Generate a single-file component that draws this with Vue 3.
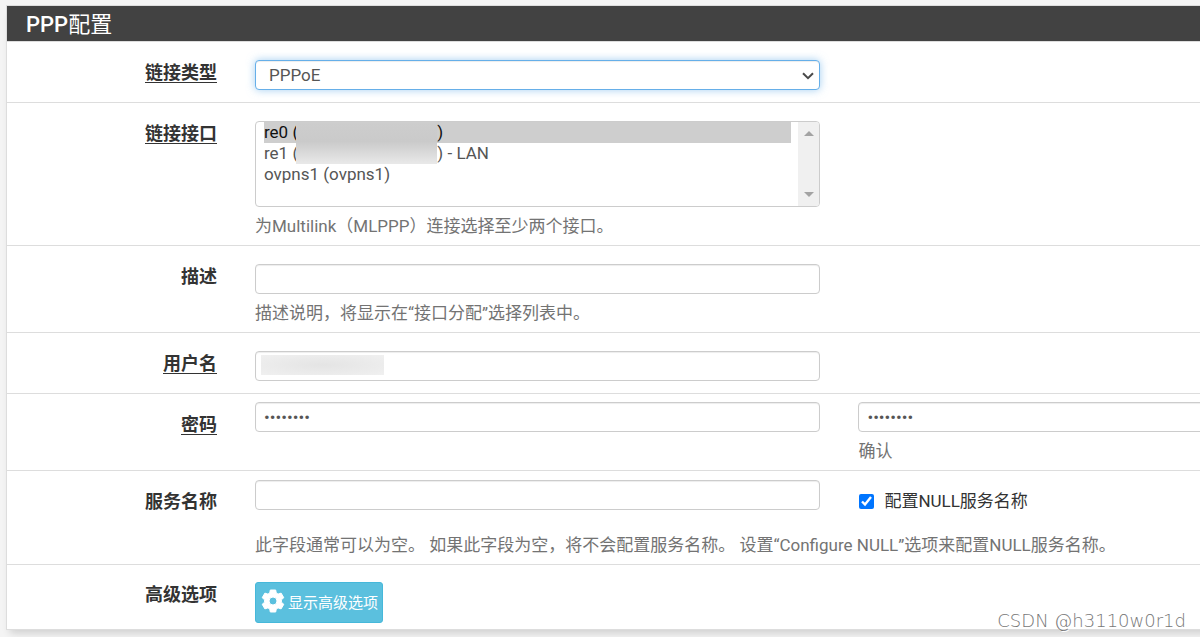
<script setup>
import { ref } from 'vue'

const gap = '\u00a0'.repeat(33)
const interfaces = [
  { id: 're0', text: `re0 (${gap})` },
  { id: 're1', text: `re1 (${gap}) - LAN` },
  { id: 'ovpns1', text: 'ovpns1 (ovpns1)' },
]
const linkType = ref('pppoe')
const selected = ref(['re0'])
const description = ref('')
const username = ref('')
const password = ref('password')
const confirmation = ref('password')
const service = ref('')
const nullService = ref(true)
</script>

<template>
  <main class="page">
    <form class="panel" @submit.prevent>
      <h2 class="heading"><strong>PPP</strong>配置</h2>

      <div class="row">
        <label class="label required" for="type"><span>链接类型</span></label>
        <div class="field select-wrap">
          <select id="type" v-model="linkType" class="control dropdown">
            <option value="pppoe">PPPoE</option>
            <option value="ppp">PPP</option>
            <option value="pptp">PPTP</option>
            <option value="l2tp">L2TP</option>
          </select>
          <svg class="chevron" viewBox="0 0 12 8" aria-hidden="true">
            <path d="M1 1.2 6 6.2 11 1.2" fill="none" stroke="#4a4a4a" stroke-width="2" />
          </svg>
        </div>
      </div>

      <div class="row">
        <label class="label required" for="ports"><span>链接接口</span></label>
        <div class="field">
          <div class="list-wrap">
            <select id="ports" v-model="selected" class="list" multiple size="4">
              <option v-for="item in interfaces" :key="item.id" :value="item.id">{{ item.text }}</option>
            </select>
            <span class="mask mask-ports"></span>
            <span class="scrollbar" aria-hidden="true">
              <svg viewBox="0 0 10 5"><path d="M0 5 5 0 10 5Z" fill="#a3a3a3" /></svg>
              <svg viewBox="0 0 10 5"><path d="M0 0 5 5 10 0Z" fill="#a3a3a3" /></svg>
            </span>
          </div>
          <p class="help">为Multilink（MLPPP）连接选择至少两个接口。</p>
        </div>
      </div>

      <div class="row">
        <label class="label" for="description">描述</label>
        <div class="field">
          <input id="description" v-model="description" class="control" type="text">
          <p class="help">描述说明，将显示在“接口分配”选择列表中。</p>
        </div>
      </div>

      <div class="row">
        <label class="label required" for="username"><span>用户名</span></label>
        <div class="field user-wrap">
          <input id="username" v-model="username" class="control" type="text">
          <span class="mask mask-user"></span>
        </div>
      </div>

      <div class="row tight">
        <label class="label required" for="password"><span>密码</span></label>
        <div class="field">
          <input id="password" v-model="password" class="control" type="password">
        </div>
        <div class="field">
          <input id="confirm" v-model="confirmation" class="control" type="password">
          <label class="help" for="confirm">确认</label>
        </div>
      </div>

      <div class="row tight service">
        <label class="label" for="service">服务名称</label>
        <div class="field">
          <input id="service" v-model="service" class="control" type="text">
        </div>
        <div class="field">
          <label class="check"><input v-model="nullService" type="checkbox">配置NULL服务名称</label>
        </div>
        <p class="help wide">此字段通常可以为空。 如果此字段为空，将不会配置服务名称。 设置“Configure NULL”选项来配置NULL服务名称。</p>
      </div>

      <div class="row last">
        <span class="label">高级选项</span>
        <div class="field">
          <button class="advanced" type="button">
            <svg viewBox="0 0 24 24" aria-hidden="true">
              <path fill="#fff" fill-rule="evenodd" d="M9.3 1h5.4l.6 3.1 1.8 1 3-1 2.7 4.6-2.4 2.1v2.4l2.4 2.1-2.7 4.6-3-1-1.8 1-.6 3.1H9.3l-.6-3.1-1.8-1-3 1-2.7-4.6 2.4-2.1v-2.4L1.2 8.7l2.7-4.6 3 1 1.8-1ZM12 8a4 4 0 1 0 0 8 4 4 0 0 0 0-8Z" stroke="#fff" stroke-width="1" stroke-linejoin="round" />
            </svg>
            <span>显示高级选项</span>
          </button>
        </div>
      </div>
    </form>
    <span class="watermark">CSDN @h3110w0r1d</span>
  </main>
</template>

<style>
body {
  margin: 0;
  background: #f4f4f4;
}
</style>

<style scoped>
.page {
  position: relative;
  box-sizing: border-box;
  min-height: 100vh;
  padding: 5px 0 7px 6px;
  overflow: hidden;
  font: 17px/25px Roboto, "Noto Sans CJK SC", sans-serif;
  color: #333;
}

/* The form is wider than the window and runs off its right edge. */
.panel {
  box-sizing: border-box;
  width: 120%;
  border: 1px solid #ddd;
  background: #fff;
  box-shadow: 0 7px 8px -4px rgba(0, 0, 0, 0.16);
}

.heading {
  margin: 0;
  padding: 6px 19px 4px;
  background: #424242;
  color: #fff;
  font-size: 22px;
  line-height: 25px;
  font-weight: 400;
}

.heading strong {
  font-weight: 500;
}

.row {
  display: grid;
  grid-template-columns: 210px minmax(0, 1fr) minmax(0, 1fr);
  column-gap: 38px;
  padding: 18px 14px 12px 0;
  border-top: 1px solid #ddd;
}

.label {
  text-align: right;
  font-size: 18px;
  font-weight: 700;
}

.required span {
  text-decoration: underline;
  text-decoration-thickness: 1px;
  text-underline-offset: 3px;
}

.control {
  display: block;
  box-sizing: border-box;
  width: 100%;
  height: 30px;
  margin: 0;
  padding: 0 8px;
  border: 1px solid #ccc;
  border-radius: 4px;
  background: #fff;
  box-shadow: inset 0 1px 1px rgba(0, 0, 0, 0.075);
  color: #555;
  font: 17px/21px Roboto, sans-serif;
}

.select-wrap,
.user-wrap,
.list-wrap {
  position: relative;
}

.dropdown {
  appearance: none;
  padding: 0 30px 0 13px;
  border-color: #66afe9;
  outline: 0;
  box-shadow: inset 0 1px 1px rgba(0, 0, 0, 0.075), 0 0 8px rgba(102, 175, 233, 0.6);
}

.chevron {
  position: absolute;
  top: 12px;
  right: 6px;
  width: 12px;
  height: 8px;
}

.list {
  display: block;
  box-sizing: border-box;
  width: 100%;
  height: 86px;
  margin: 0;
  padding: 0 28px 0 8px;
  overflow: hidden;
  border: 1px solid #ccc;
  border-radius: 4px;
  outline: 0;
  background: #fff;
  color: #555;
  font: 17px/21px Roboto, sans-serif;
}

.list option {
  height: 21px;
  min-height: 0;
  padding: 0;
}

.mask {
  position: absolute;
}

.mask-ports {
  top: 2px;
  left: 41px;
  width: 141px;
  height: 41px;
  background: linear-gradient(#cdcdcd, #cacaca 45%, #e9e9e9);
}

.mask-user {
  top: 4px;
  left: 6px;
  width: 123px;
  height: 20px;
  background: radial-gradient(#e4e4e4, #f0f0f0);
}

.scrollbar {
  position: absolute;
  top: 1px;
  right: 1px;
  bottom: 1px;
  display: flex;
  flex-direction: column;
  justify-content: space-between;
  align-items: center;
  box-sizing: border-box;
  width: 21px;
  padding: 9px 0;
  border-radius: 0 3px 3px 0;
  background: #f0f0f0;
}

.scrollbar svg {
  width: 10px;
  height: 5px;
}

.help {
  display: block;
  margin: 7px 0 -6px;
  color: #737373;
}

.tight {
  padding-top: 8px;
}

.tight .label {
  padding-top: 10px;
}

.service {
  padding-top: 9px;
}

.service .label {
  padding-top: 9px;
}

.wide {
  grid-column: 2 / -1;
  margin-top: 19px;
}

.check {
  display: flex;
  align-items: center;
  padding-top: 9px;
}

.check input {
  width: 15px;
  height: 15px;
  margin: 0 10px 0 1px;
}

.last {
  padding-top: 17px;
  padding-bottom: 6px;
}

.advanced {
  display: flex;
  align-items: center;
  gap: 3px;
  height: 41px;
  padding: 0 4px 0 5px;
  border: 1px solid #46b8da;
  border-radius: 3px;
  background: #5bc0de;
  color: #fff;
  font: 15px/22px Roboto, "Noto Sans CJK SC", sans-serif;
}

.advanced svg {
  width: 24px;
  height: 24px;
  margin-bottom: 4px;
}

.watermark {
  position: absolute;
  right: 14px;
  bottom: 4px;
  color: #777;
  font: 200 18px/25px "DejaVu Sans", sans-serif;
  text-shadow: 1px 1px 0 #fff;
}
</style>
